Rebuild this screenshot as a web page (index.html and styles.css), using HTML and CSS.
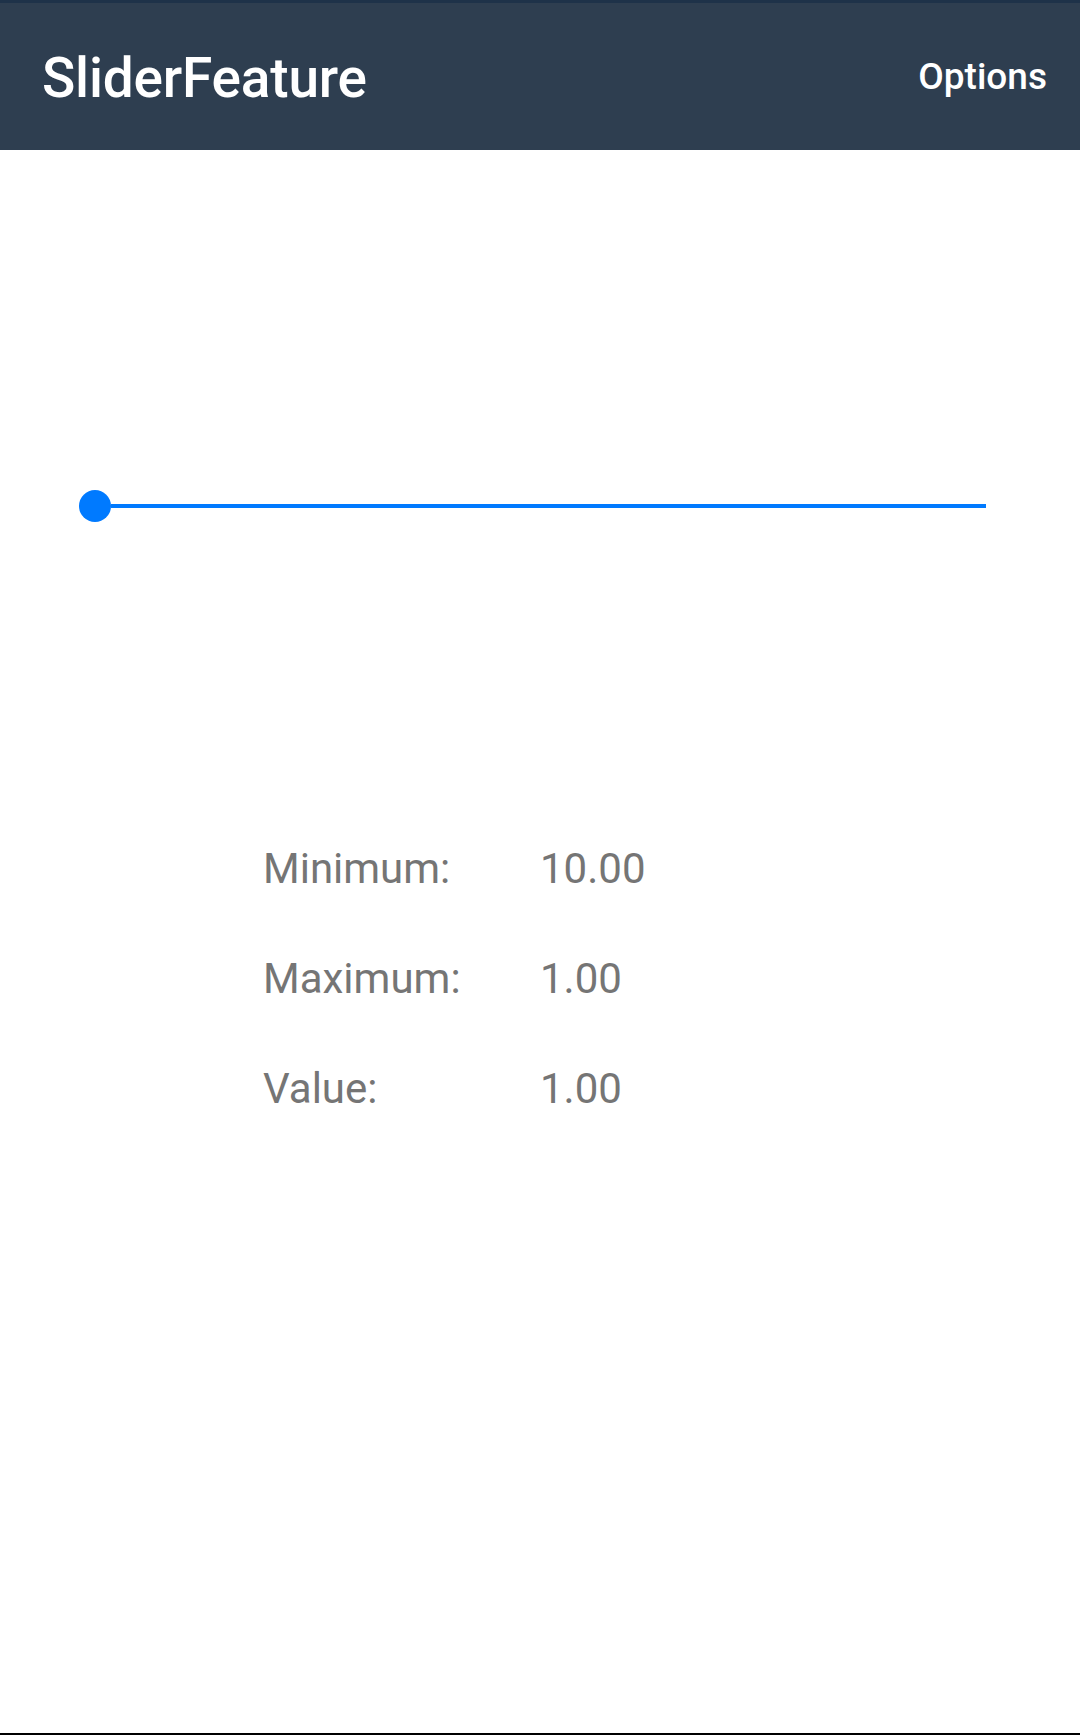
FILE: index.html
```html
<!DOCTYPE html>
<html>
<head>
<meta charset="utf-8">
<link rel="stylesheet" href="styles.css">
</head>
<body>
<div class="screen">
  <header class="appbar">
    <h1 class="title">SliderFeature</h1>
    <span class="action">Options</span>
  </header>
  <main class="content">
    <div class="slider">
      <span class="thumb"></span>
      <span class="track"></span>
    </div>
    <div class="stats">
      <span class="label">Minimum:</span><span class="value">10.00</span>
      <span class="label">Maximum:</span><span class="value">1.00</span>
      <span class="label">Value:</span><span class="value">1.00</span>
    </div>
  </main>
</div>
</body>
</html>
```

FILE: styles.css
```css
html, body {
  margin: 0;
  padding: 0;
  background: #ffffff;
}
body {
  font-family: Roboto, "Noto Sans", sans-serif;
}
.screen {
  height: 1735px;
  box-sizing: border-box;
  border-bottom: 2px solid #000000;
  display: flex;
  flex-direction: column;
}
.appbar {
  height: 150px;
  box-sizing: border-box;
  border-top: 3px solid #1e3249;
  background: #2e3e50;
  display: flex;
  align-items: center;
  justify-content: space-between;
  padding: 3px 33px 0 42px;
}
.title {
  margin: 0;
  font-size: 55px;
  font-weight: 500;
  letter-spacing: -0.2px;
  color: #ffffff;
}
.action {
  font-size: 37px;
  font-weight: 500;
  color: #ffffff;
  margin-top: -3px;
}
.content {
  flex: 1;
  display: flex;
  flex-direction: column;
}
.slider {
  margin: 340px 0 0 79px;
  width: 907px;
  height: 32px;
  display: flex;
  align-items: center;
}
.thumb {
  width: 32px;
  height: 32px;
  border-radius: 50%;
  background: #007aff;
  flex: none;
}
.track {
  flex: 1;
  height: 4px;
  background: #007aff;
}
.stats {
  margin: 292px 0 0 263px;
  display: grid;
  grid-template-columns: 277px auto;
  font-size: 42px;
  line-height: 110px;
  color: #757575;
}
```
